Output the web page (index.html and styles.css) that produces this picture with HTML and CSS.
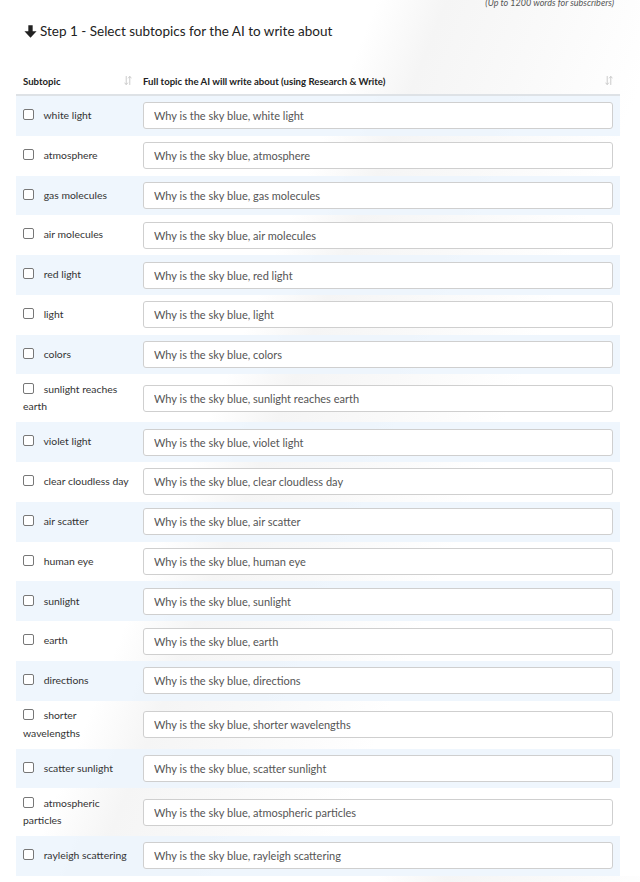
FILE: index.html
```html
<!DOCTYPE html>
<html lang="en">
<head>
    <meta charset="UTF-8">
    <title>Select subtopics</title>
    <link rel="stylesheet" href="styles.css">
</head>
<body>
    <div class="wrap">
        <div class="note">(Up to 1200 words for subscribers)</div>
        <h3 class="step">
            <svg class="arrow" viewBox="0 0 12 12" width="13" height="13"><path d="M4 0.3h4v5.4h3.6L6 11.7 0.4 5.7H4z" fill="#222"/></svg>
            Step 1 - Select subtopics for the AI to write about
        </h3>
        <table class="topics">
            <thead>
                <tr>
                    <th class="col-sub">Subtopic <span class="sort"><svg viewBox="0 0 9 11" width="8" height="11"><path d="M2.5 0.5v9.5M0.7 8l1.8 2.2 1.8-2.2M6.5 10.5V1M4.7 3l1.8-2.2 1.8 2.2" stroke="#cacaca" stroke-width="1.1" fill="none"/></svg></span></th>
                    <th class="col-full">Full topic the AI will write about (using Research &amp; Write) <span class="sort"><svg viewBox="0 0 9 11" width="8" height="11"><path d="M2.5 0.5v9.5M0.7 8l1.8 2.2 1.8-2.2M6.5 10.5V1M4.7 3l1.8-2.2 1.8 2.2" stroke="#cacaca" stroke-width="1.1" fill="none"/></svg></span></th>
                </tr>
            </thead>
            <tbody id="rows"></tbody>
        </table>
    </div>

    <script>
        const subtopics = [
            'white light', 'atmosphere', 'gas molecules', 'air molecules', 'red light',
            'light', 'colors', 'sunlight reaches earth', 'violet light', 'clear cloudless day',
            'air scatter', 'human eye', 'sunlight', 'earth', 'directions',
            'shorter wavelengths', 'scatter sunlight', 'atmospheric particles', 'rayleigh scattering'
        ];
        const rows = document.getElementById('rows');

        subtopics.forEach(topic => {
            const tr = document.createElement('tr');
            tr.innerHTML = `
                <td class="col-sub"><input type="checkbox" class="check"> ${topic}</td>
                <td class="col-full"><input type="text" class="topic-input" value="Why is the sky blue, ${topic}"></td>`;
            rows.appendChild(tr);
        });
    </script>
</body>
</html>
```

FILE: styles.css
```css
body {
    margin: 0;
    font-family: Lato, "Open Sans", sans-serif;
    color: #333;
    background-color: #fff;
    background-image: linear-gradient(112deg, #fff 38%, #f5f5f5 45%, #f9f9f9 55%, #fff 68%);
}
.wrap {
    padding: 0 20px 0 16px;
}
.note {
    text-align: right;
    font-size: 9px;
    font-style: italic;
    color: #555;
    margin-top: -3px;
    padding-right: 6px;
    line-height: 11px;
}
.step {
    margin: 14px 0 0 8px;
    font-size: 13.5px;
    font-weight: normal;
    color: #222;
    display: flex;
    align-items: center;
    gap: 3px;
    height: 18px;
}
.topics {
    margin-top: 31px;
    width: 604px;
    border-collapse: collapse;
    table-layout: fixed;
}
.topics th {
    font-size: 9.6px;
    font-weight: bold;
    color: #222;
    text-align: left;
    padding: 5px 7px 7px;
    border-bottom: 2px solid #dee2e6;
    position: relative;
}
.topics th.col-sub {
    width: 109px;
}
.topics .col-full {
    padding-left: 4px;
}
.sort {
    position: absolute;
    right: 7px;
    top: 4px;
}
.topics td {
    padding: 6.4px 7px;
    vertical-align: middle;
    font-size: 10.4px;
    line-height: 17.5px;
    color: #333;
}
.topics tbody tr:nth-child(odd) {
    background-color: rgba(236, 245, 253, 0.85);
}
.check {
    appearance: none;
    width: 11px;
    height: 11px;
    border: 1px solid #777;
    border-radius: 2px;
    background: #fff;
    margin: 0 7px 0 0;
    vertical-align: -1px;
}
.topic-input {
    box-sizing: border-box;
    width: 100%;
    height: 27px;
    border: 1px solid #cfcfcf;
    border-radius: 3px;
    padding: 0 10px;
    font-family: Lato, "Open Sans", sans-serif;
    font-size: 11px;
    color: #555;
    background: #fff;
    display: block;
}
```
